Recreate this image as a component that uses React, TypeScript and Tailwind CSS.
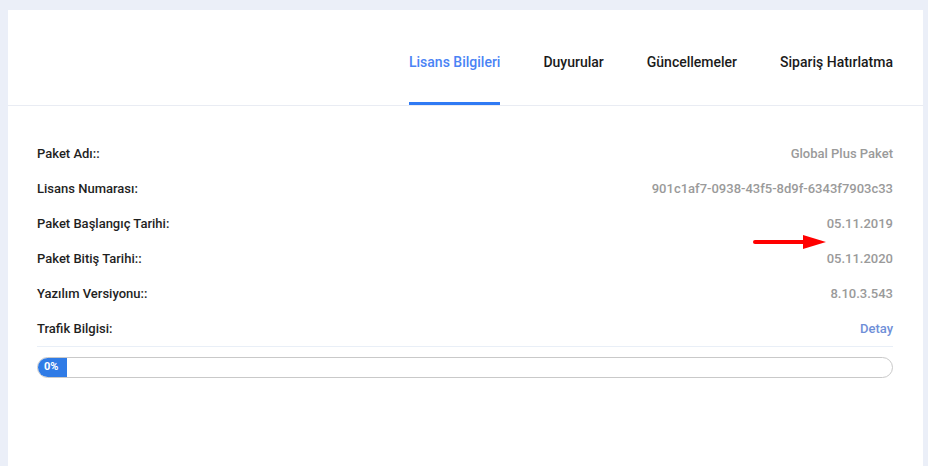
import React from "react";

type Row = {
  label: string;
  value: string;
  link?: boolean;
};

const rows: Row[] = [
  { label: "Paket Adı::", value: "Global Plus Paket" },
  { label: "Lisans Numarası:", value: "901c1af7-0938-43f5-8d9f-6343f7903c33" },
  { label: "Paket Başlangıç Tarihi:", value: "05.11.2019" },
  { label: "Paket Bitiş Tarihi::", value: "05.11.2020" },
  { label: "Yazılım Versiyonu::", value: "8.10.3.543" },
  { label: "Trafik Bilgisi:", value: "Detay", link: true },
];

const tabs = ["Lisans Bilgileri", "Duyurular", "Güncellemeler", "Sipariş Hatırlatma"];

export default function App() {
  const usage = 0;

  return (
    <div
      className="min-h-[466px] bg-[#ebeff8] pt-[10px] pl-[8px] pr-[5px]"
      style={{ fontFamily: "Roboto, 'Liberation Sans', sans-serif" }}
    >
      <div className="bg-white min-h-[456px] relative">
        {/* Tabs */}
        <div className="h-[96px] border-b border-[#e9ecf3] flex justify-end items-end pr-[30px] gap-[43px]">
          {tabs.map((tab, i) => (
            <div
              key={tab}
              className={`h-full flex items-center pt-[10px] text-[14px] font-medium relative ${
                i === 0 ? "text-[#4a83f5]" : "text-[#1b1b1b]"
              }`}
            >
              {tab}
              {i === 0 && (
                <div className="absolute left-0 right-0 bottom-0 h-[3px] bg-[#2f7af4]"></div>
              )}
            </div>
          ))}
        </div>

        {/* Info rows */}
        <div className="pl-[29px] pr-[30px] pt-[30px]">
          {rows.map((row) => (
            <div key={row.label} className="h-[35px] flex items-center justify-between text-[13px] font-medium">
              <span className="text-[#1f1f1f]">{row.label}</span>
              <span className={row.link ? "text-[#6f8fd8]" : "text-[#9a9a9a]"}>{row.value}</span>
            </div>
          ))}
          <div className="border-t border-[#e9eff7]"></div>

          {/* Progress bar */}
          <div className="mt-[10px] h-[21px] rounded-full border border-[#c9c9c9] overflow-hidden flex">
            <div
              className="bg-[#2f7be6] text-white text-[11px] font-bold flex items-center pl-[6px] min-w-[29px]"
              style={{ width: `${usage}%` }}
            >
              {usage}%
            </div>
          </div>
        </div>

        {/* Red arrow */}
        <svg
          className="absolute left-[740px] top-[223px]"
          width="80"
          height="18"
          viewBox="0 0 80 18"
        >
          <line x1="7" y1="9" x2="58" y2="9" stroke="#f00" strokeWidth="4" strokeLinecap="round" />
          <polygon points="55,2 78,9 55,16" fill="#f00" />
        </svg>
      </div>
    </div>
  );
}
